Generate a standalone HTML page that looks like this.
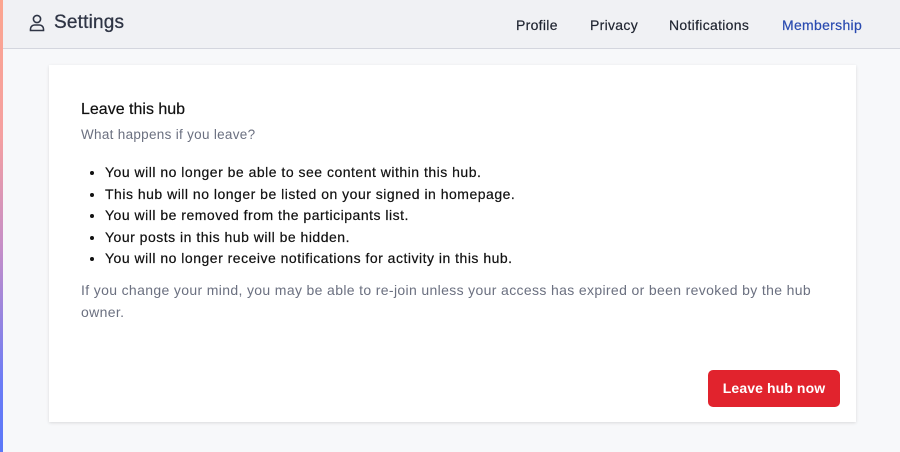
<!DOCTYPE html>
<html><head><style>
*{margin:0;padding:0;box-sizing:border-box}
body{width:900px;height:452px;overflow:hidden;background:#f7f8fa;font-family:"Liberation Sans",sans-serif;position:relative}
.stripe{position:absolute;left:0;top:0;width:3px;height:452px;background:linear-gradient(#fca58f,#f5a0a0 30%,#c58ec8 55%,#6b7cf6 85%,#5b78f8)}
.hdr{position:absolute;left:3px;top:0;right:0;height:49px;background:#f0f1f4;border-bottom:1px solid #d4d6de}
.title{position:absolute;left:26px;top:12px;font-size:19px;color:#2f3545;display:flex;align-items:center;gap:9px;letter-spacing:0.2px;-webkit-text-stroke:0.3px #2f3545}
.nav{position:absolute;top:17px;font-size:14px;color:#1f2430;letter-spacing:0.3px;-webkit-text-stroke:0.2px #1f2430}
.card{position:absolute;left:49px;top:65px;width:807px;height:357px;background:#fff;box-shadow:0 1px 3px rgba(0,0,0,.12)}
h2{position:absolute;left:32px;top:36px;font-size:16px;font-weight:normal;color:#111;-webkit-text-stroke:0.2px #111}
.sub{position:absolute;left:32px;top:62px;font-size:13.5px;color:#6b7080;letter-spacing:0.3px}
ul{position:absolute;left:56px;top:97px;font-size:14px;color:#111;line-height:21.5px;letter-spacing:0.5px;-webkit-text-stroke:0.2px #111}
.note{position:absolute;left:32px;top:215px;width:760px;font-size:14px;color:#6b7080;line-height:21.5px;letter-spacing:0.35px}
.btn{position:absolute;left:659px;top:305px;width:132px;height:37px;background:#e1232d;border-radius:5px;color:#fff;font-size:14px;text-align:center;line-height:37px;font-weight:bold;letter-spacing:0.1px}
</style></head><body>
<div class="stripe"></div>
<div class="hdr">
<div class="title"><svg width="16" height="18" viewBox="0 0 16 18" fill="none" stroke="#2f3545" stroke-width="1.6"><circle cx="8" cy="5" r="3.6"/><path d="M1.5 16.5v-1.5a4 4 0 0 1 4-4h5a4 4 0 0 1 4 4v1.5z"/></svg>Settings</div>
<div class="nav" style="left:513px">Profile</div>
<div class="nav" style="left:587px">Privacy</div>
<div class="nav" style="left:666px">Notifications</div>
<div class="nav" style="left:779px;color:#2a4bb0;-webkit-text-stroke:0.2px #2a4bb0">Membership</div>
</div>
<div class="card">
<h2>Leave this hub</h2>
<div class="sub">What happens if you leave?</div>
<ul>
<li>You will no longer be able to see content within this hub.</li>
<li>This hub will no longer be listed on your signed in homepage.</li>
<li>You will be removed from the participants list.</li>
<li>Your posts in this hub will be hidden.</li>
<li>You will no longer receive notifications for activity in this hub.</li>
</ul>
<div class="note">If you change your mind, you may be able to re-join unless your access has expired or been revoked by the hub<br>owner.</div>
<div class="btn">Leave hub now</div>
</div>
</body></html>
